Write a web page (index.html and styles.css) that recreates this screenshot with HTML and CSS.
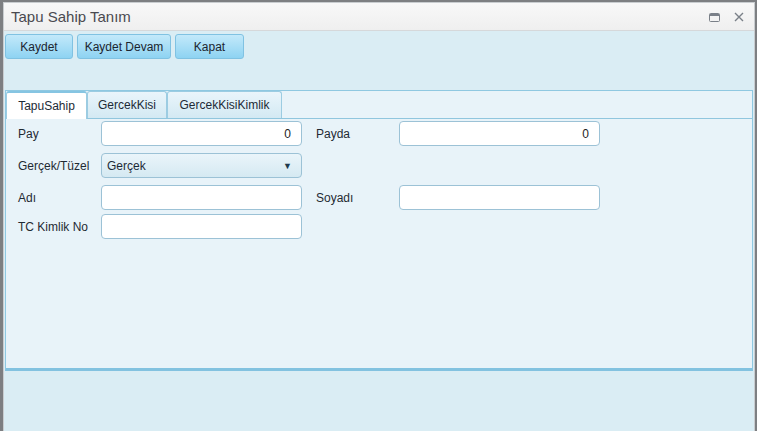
FILE: index.html
```html
<!DOCTYPE html>
<html lang="tr">
<head>
<meta charset="utf-8">
<title>Tapu Sahip Tanım</title>
<link rel="stylesheet" href="styles.css">
</head>
<body>
<div class="window">
  <div class="titlebar">
    <span class="title">Tapu Sahip Tanım</span>
    <span class="actions">
      <svg class="ico" width="11" height="9" viewBox="0 0 11 9"><rect x="0.5" y="0.5" width="10" height="8" rx="1" fill="none" stroke="#7a8088" stroke-width="1"/><rect x="1" y="1" width="9" height="2" fill="#7a8088"/></svg>
      <svg class="ico" width="10" height="10" viewBox="0 0 10 10"><path d="M1 1L9 9M9 1L1 9" stroke="#7a8088" stroke-width="1.4"/></svg>
    </span>
  </div>
  <div class="toolbar">
    <button class="btn btn-kaydet">Kaydet</button>
    <button class="btn btn-devam">Kaydet Devam</button>
    <button class="btn btn-kapat">Kapat</button>
  </div>
  <div class="tabpanel">
    <div class="tabstrip">
      <div class="tab active">TapuSahip</div>
      <div class="tab t2">GercekKisi</div>
      <div class="tab t3">GercekKisiKimlik</div>
    </div>
    <div class="content">
      <div class="row r1">
        <label class="lbl">Pay</label>
        <div class="input num">0</div>
        <label class="lbl lbl2">Payda</label>
        <div class="input num">0</div>
      </div>
      <div class="row r2">
        <label class="lbl">Gerçek/Tüzel</label>
        <div class="select"><span>Gerçek</span><span class="arrow">▼</span></div>
      </div>
      <div class="row r3">
        <label class="lbl">Adı</label>
        <div class="input"></div>
        <label class="lbl lbl2">Soyadı</label>
        <div class="input"></div>
      </div>
      <div class="row r4">
        <label class="lbl">TC Kimlik No</label>
        <div class="input tall"></div>
      </div>
    </div>
  </div>
</div>
</body>
</html>
```
FILE: styles.css
```css
html, body {
  margin: 0;
  padding: 0;
  height: 100%;
  overflow: hidden;
}
body {
  background: #7d7f82;
  font-family: "Liberation Sans", Arial, sans-serif;
  font-size: 12px;
  color: #222;
}
.window {
  margin: 2px 2px 0 3px;
  height: 440px;
  background: #daedf4;
  border: 1px solid #c9cdd0;
  border-bottom: none;
  box-sizing: border-box;
}
.titlebar {
  height: 27px;
  background: linear-gradient(#f8f8f8, #efefef);
  border-bottom: 1px solid #d6d8da;
  display: flex;
  align-items: center;
  justify-content: space-between;
  padding: 0 10px 0 7px;
}
.title {
  font-size: 15px;
  color: #4a4a50;
}
.actions {
  display: flex;
  align-items: center;
  gap: 14px;
  padding-top: 1px;
}
.ico { display: block; }
.toolbar {
  display: flex;
  gap: 4px;
  padding: 3px 1px 0 1px;
  height: 28px;
}
.btn {
  height: 25px;
  border: 1px solid #80c2e2;
  border-radius: 3px;
  background: linear-gradient(#c3e9fa, #8ed3f2);
  font-family: "Liberation Sans", Arial, sans-serif;
  font-size: 12px;
  color: #1c2530;
  padding: 0;
  box-sizing: border-box;
}
.btn-kaydet { width: 68px; }
.btn-devam { width: 94px; }
.btn-kapat { width: 69px; }
.tabpanel {
  margin: 28px 1px 0 1px;
  height: 281px;
  box-sizing: border-box;
  border: 1px solid #8fc8e1;
  border-bottom: 3px solid #82c2e0;
  background: #e8f3f9;
  display: flex;
  flex-direction: column;
}
.tabstrip {
  height: 28px;
  display: flex;
  align-items: flex-end;
  border-bottom: 1px solid #90c6de;
  box-sizing: border-box;
}
.tab {
  height: 27px;
  box-sizing: border-box;
  border: 1px solid #9ccce2;
  border-bottom: none;
  border-radius: 3px 3px 0 0;
  background: linear-gradient(#eaf5fb, #d3e9f3);
  display: flex;
  align-items: center;
  justify-content: center;
  font-size: 12px;
  color: #1d2a36;
}
.tab.active {
  width: 81px;
  background: #ffffff;
  border-top: 2px solid #86c5e2;
  height: 28px;
  margin-bottom: -1px;
}
.tab.t2 { width: 80px; }
.tab.t3 { width: 115px; }
.content {
  padding: 2px 0 0 12px;
  display: flex;
  flex-direction: column;
}
.row {
  display: flex;
  align-items: center;
  height: 25px;
}
.r1 { margin-bottom: 7px; }
.r2 { margin-bottom: 7px; }
.r3 { margin-bottom: 4px; }
.tall { height: 26px; }
.lbl {
  width: 83px;
  font-size: 12px;
  color: #1f2a33;
}
.lbl2 {
  margin-left: 14px;
}
.input {
  width: 201px;
  height: 25px;
  box-sizing: border-box;
  border: 1px solid #9cc2d6;
  border-radius: 4px;
  background: #ffffff;
  display: flex;
  align-items: center;
  justify-content: flex-end;
  padding-right: 10px;
  font-size: 12px;
  color: #222;
}
.select {
  width: 201px;
  height: 25px;
  box-sizing: border-box;
  border: 1px solid #9cc2d6;
  border-radius: 4px;
  background: linear-gradient(#eaf5fa, #d5e9f2);
  display: flex;
  align-items: center;
  justify-content: space-between;
  padding: 0 9px 0 5px;
  font-size: 12px;
  color: #1d2a36;
}
.arrow {
  font-size: 9px;
  color: #213a4c;
}
```
